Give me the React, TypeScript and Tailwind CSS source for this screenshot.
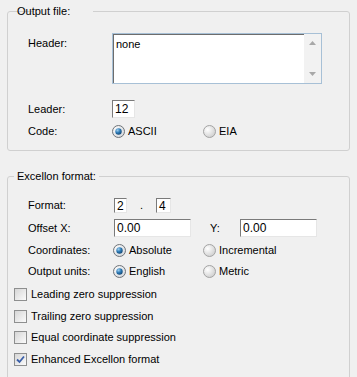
import React from 'react';

const font = { fontFamily: '"Liberation Sans", Arial, sans-serif' };

function Radio({ checked, label }: { checked?: boolean; label: string }) {
  return (
    <div className="flex items-center gap-[3px]">
      <svg width="13" height="13" viewBox="0 0 13 13">
        <defs>
          <radialGradient id={checked ? 'rOn' : 'rOff'} cx="0.35" cy="0.35" r="0.8">
            <stop offset="0" stopColor="#ffffff" />
            <stop offset="1" stopColor={checked ? '#cfd3d8' : '#c8c8c8'} />
          </radialGradient>
          <radialGradient id="dot" cx="0.35" cy="0.3" r="0.8">
            <stop offset="0" stopColor="#9fd0f0" />
            <stop offset="0.5" stopColor="#2a78b4" />
            <stop offset="1" stopColor="#11406a" />
          </radialGradient>
        </defs>
        <circle cx="6.5" cy="6.5" r="6" fill={`url(#${checked ? 'rOn' : 'rOff'})`} stroke={checked ? '#6f7378' : '#a3a3a3'} strokeWidth="1" />
        {checked && <circle cx="6.5" cy="6.5" r="3.2" fill="url(#dot)" />}
      </svg>
      <span>{label}</span>
    </div>
  );
}

function Checkbox({ checked, label }: { checked?: boolean; label: string }) {
  return (
    <div className="flex items-center h-[13px] gap-[4px]">
      <div className="w-[13px] h-[13px] border border-[#8e8f8f] bg-gradient-to-br from-[#d6d6d6] to-[#fbfbfb] flex items-center justify-center">
        {checked && (
          <svg width="9" height="9" viewBox="0 0 9 9">
            <path d="M1 4.5 L3.5 7 L8 1.5" fill="none" stroke="#3a5fa8" strokeWidth="1.8" />
          </svg>
        )}
      </div>
      <span>{label}</span>
    </div>
  );
}

function Field({ value, className }: { value: string; className: string }) {
  return (
    <div
      className={`bg-white border border-[#7a7a7a] border-r-[#e6e6e6] border-b-[#e6e6e6] flex items-center pl-[2px] leading-none ${className}`}
    >
      {value}
    </div>
  );
}

export default function App() {
  return (
    <div
      className="w-[357px] h-[377px] bg-[#f0f0f0] px-[7px] pt-[5px] overflow-hidden text-[11px] text-black leading-[13px]"
      style={font}
    >
      <fieldset className="border border-[#d0d0d0] rounded-[3px] h-[146px] pl-[20px]">
        <legend className="ml-[6px] px-[3px] -translate-x-[20px]">Output file:</legend>

        <div className="flex mt-[15px]">
          <div className="w-[84px] pt-[4px]">Header:</div>
          <div className="relative w-[210px] h-[51px] bg-white border border-[#a7c0d6] shadow-[inset_1px_1px_0_#6d6d6d] flex">
            <div className="flex-1 pl-[3px] pt-[4px]">none</div>
            <div className="w-[17px] h-full bg-[#f2f2f2] flex flex-col items-center justify-between py-[7px]">
              <svg width="7" height="4" viewBox="0 0 7 4">
                <path d="M0 4 L3.5 0 L7 4 Z" fill="#a8a8a8" />
              </svg>
              <svg width="7" height="4" viewBox="0 0 7 4">
                <path d="M0 0 L3.5 4 L7 0 Z" fill="#a8a8a8" />
              </svg>
            </div>
          </div>
        </div>

        <div className="flex items-center mt-[16px]">
          <div className="w-[84px]">Leader:</div>
          <Field value="12" className="w-[23px] h-[18px] text-[12px]" />
        </div>

        <div className="flex items-center mt-[4px] h-[18px]">
          <div className="w-[84px]">Code:</div>
          <div className="w-[91px]">
            <Radio checked label="ASCII" />
          </div>
          <Radio label="EIA" />
        </div>
      </fieldset>

      <fieldset className="border border-[#d0d0d0] rounded-[3px] h-[260px] mt-[19px]">
        <legend className="ml-[6px] px-[3px]">Excellon format:</legend>

        <div className="pl-[20px]">
          <div className="flex items-center mt-[15px] h-[15px]">
            <div className="w-[86px]">Format:</div>
            <Field value="2" className="w-[13px] h-[15px] text-[12px]" />
            <div className="w-[29px] text-center">.</div>
            <Field value="4" className="w-[15px] h-[15px] text-[12px]" />
          </div>

          <div className="flex items-center mt-[6px] h-[18px]">
            <div className="w-[86px]">Offset X:</div>
            <Field value="0.00" className="w-[77px] h-[18px] text-[12px]" />
            <div className="ml-[19px] w-[30px]">Y:</div>
            <Field value="0.00" className="w-[77px] h-[18px] text-[12px]" />
          </div>

          <div className="flex items-center mt-[5px] h-[16px]">
            <div className="w-[85px]">Coordinates:</div>
            <div className="w-[90px]">
              <Radio checked label="Absolute" />
            </div>
            <Radio label="Incremental" />
          </div>

          <div className="flex items-center mt-[5px] h-[16px]">
            <div className="w-[85px]">Output units:</div>
            <div className="w-[90px]">
              <Radio checked label="English" />
            </div>
            <Radio label="Metric" />
          </div>
        </div>

        <div className="pl-[6px]">
          <div className="mt-[9px]">
            <Checkbox label="Leading zero suppression" />
          </div>
          <div className="mt-[9px]">
            <Checkbox label="Trailing zero suppression" />
          </div>
          <div className="mt-[8px]">
            <Checkbox label="Equal coordinate suppression" />
          </div>
          <div className="mt-[9px]">
            <Checkbox checked label="Enhanced Excellon format" />
          </div>
        </div>
      </fieldset>
    </div>
  );
}
